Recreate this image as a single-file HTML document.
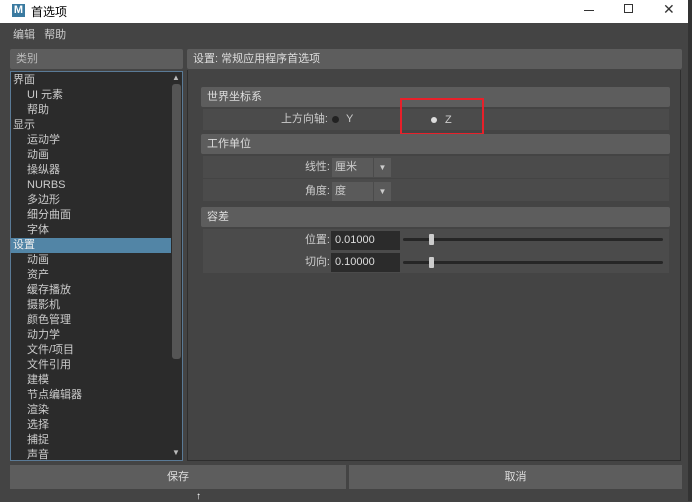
<!DOCTYPE html>
<html><head><meta charset="utf-8"><style>
*{margin:0;padding:0;box-sizing:border-box}
body{width:692px;height:501px;background:#444;font-family:"Liberation Sans","Noto Sans CJK SC",sans-serif;font-size:11px;color:#ccc;position:relative;overflow:hidden}
.a{position:absolute}
.hdr{background:#5d5d5d;border-radius:2px;color:#ddd;padding-left:6px;line-height:20px}
.row{background:#4b4b4b}
.lbl{text-align:right;color:#ccc;line-height:14px}
.item{position:absolute;left:2px;line-height:15px;color:#ccc;white-space:nowrap}
</style></head><body>
<div class="a" style="left:0;top:0;width:688px;height:23px;background:#fff;color:#000;font-size:12px">
 <div class="a" style="left:12px;top:4px;width:13px;height:13px;background:#3a7aa0;color:#fff;font-size:11px;font-weight:bold;line-height:13px;text-align:center">M</div>
 <div class="a" style="left:31px;top:3px">首选项</div>
 <div class="a" style="left:584px;top:10px;width:10px;height:1px;background:#333"></div>
 <div class="a" style="left:624px;top:4px;width:9px;height:9px;border:1px solid #333"></div>
 <div class="a" style="left:663px;top:1px;font-size:14px;color:#333">✕</div>
</div>
<div class="a" style="left:688px;top:0;width:4px;height:501px;background:#333"></div>
<div class="a" style="left:13px;top:26px;color:#ccc">编辑&nbsp;&nbsp;&nbsp;帮助</div>
<div class="a hdr" style="left:10px;top:49px;width:173px;height:20px;color:#bbb">类别</div>
<div class="a hdr" style="left:187px;top:49px;width:495px;height:20px">设置: 常规应用程序首选项</div>
<div class="a" style="left:10px;top:71px;width:173px;height:390px;background:#2b2b2b;border:1px solid #5a7a96;overflow:hidden">
 <div class="a" style="left:0;top:166px;width:160px;height:15px;background:#5285a6"></div>
 <div class="item" style="top:1px">界面</div>
 <div class="item" style="top:16px;left:16px">UI 元素</div>
 <div class="item" style="top:31px;left:16px">帮助</div>
 <div class="item" style="top:46px">显示</div>
 <div class="item" style="top:61px;left:16px">运动学</div>
 <div class="item" style="top:76px;left:16px">动画</div>
 <div class="item" style="top:91px;left:16px">操纵器</div>
 <div class="item" style="top:106px;left:16px">NURBS</div>
 <div class="item" style="top:121px;left:16px">多边形</div>
 <div class="item" style="top:136px;left:16px">细分曲面</div>
 <div class="item" style="top:151px;left:16px">字体</div>
 <div class="item" style="top:166px;color:#eee">设置</div>
 <div class="item" style="top:181px;left:16px">动画</div>
 <div class="item" style="top:196px;left:16px">资产</div>
 <div class="item" style="top:211px;left:16px">缓存播放</div>
 <div class="item" style="top:226px;left:16px">摄影机</div>
 <div class="item" style="top:241px;left:16px">颜色管理</div>
 <div class="item" style="top:256px;left:16px">动力学</div>
 <div class="item" style="top:271px;left:16px">文件/项目</div>
 <div class="item" style="top:286px;left:16px">文件引用</div>
 <div class="item" style="top:301px;left:16px">建模</div>
 <div class="item" style="top:316px;left:16px">节点编辑器</div>
 <div class="item" style="top:331px;left:16px">渲染</div>
 <div class="item" style="top:346px;left:16px">选择</div>
 <div class="item" style="top:361px;left:16px">捕捉</div>
 <div class="item" style="top:376px;left:16px">声音</div>
 <div class="a" style="left:160px;top:0;width:12px;height:388px;background:#2b2b2b"></div>
 <div class="a" style="left:161px;top:12px;width:9px;height:275px;background:#555;border-radius:3px"></div>
 <div class="a" style="left:161px;top:1px;font-size:8px;color:#bbb">▲</div>
 <div class="a" style="left:161px;top:376px;font-size:8px;color:#bbb">▼</div>
</div>
<div class="a" style="left:187px;top:70px;width:494px;height:391px;border:1px solid #2e2e2e;border-top:none"></div>
<div class="a hdr" style="left:201px;top:87px;width:469px;height:20px">世界坐标系</div>
<div class="a row" style="left:203px;top:109px;width:466px;height:21px"></div>
<div class="a lbl" style="left:248px;top:112px;width:80px">上方向轴:</div>
<div class="a" style="left:332px;top:116px;width:7px;height:7px;border-radius:50%;background:#222"></div>
<div class="a" style="left:346px;top:112px;line-height:14px">Y</div>
<div class="a" style="left:431px;top:117px;width:6px;height:6px;border-radius:50%;background:#ddd"></div>
<div class="a" style="left:445px;top:113px;line-height:14px">Z</div>
<div class="a" style="left:400px;top:98px;width:84px;height:37px;border:2px solid #e8202a"></div>
<div class="a hdr" style="left:201px;top:134px;width:469px;height:20px">工作单位</div>
<div class="a row" style="left:203px;top:156px;width:466px;height:22px"></div>
<div class="a row" style="left:203px;top:179px;width:466px;height:22px"></div>
<div class="a lbl" style="left:250px;top:160px;width:80px">线性:</div>
<div class="a" style="left:332px;top:158px;width:41px;height:19px;background:#5a5a5a;padding-left:3px;line-height:19px">厘米</div>
<div class="a" style="left:374px;top:158px;width:17px;height:19px;background:#5a5a5a;font-size:8px;text-align:center;line-height:19px">▼</div>
<div class="a lbl" style="left:250px;top:184px;width:80px">角度:</div>
<div class="a" style="left:332px;top:182px;width:41px;height:19px;background:#5a5a5a;padding-left:3px;line-height:19px">度</div>
<div class="a" style="left:374px;top:182px;width:17px;height:19px;background:#5a5a5a;font-size:8px;text-align:center;line-height:19px">▼</div>
<div class="a hdr" style="left:201px;top:207px;width:469px;height:20px">容差</div>
<div class="a row" style="left:203px;top:229px;width:466px;height:44px"></div>
<div class="a lbl" style="left:250px;top:233px;width:80px">位置:</div>
<div class="a" style="left:331px;top:231px;width:69px;height:19px;background:#2b2b2b;padding-left:4px;line-height:19px;color:#ddd">0.01000</div>
<div class="a lbl" style="left:250px;top:255px;width:80px">切向:</div>
<div class="a" style="left:331px;top:253px;width:69px;height:19px;background:#2b2b2b;padding-left:4px;line-height:19px;color:#ddd">0.10000</div>
<div class="a" style="left:403px;top:238px;width:260px;height:3px;background:#262626;border-radius:2px"></div>
<div class="a" style="left:403px;top:261px;width:260px;height:3px;background:#262626;border-radius:2px"></div>
<div class="a" style="left:429px;top:234px;width:5px;height:11px;background:#ccc;border-radius:1px"></div>
<div class="a" style="left:429px;top:257px;width:5px;height:11px;background:#ccc;border-radius:1px"></div>
<div class="a" style="left:10px;top:465px;width:336px;height:24px;background:#5d5d5d;text-align:center;line-height:24px;color:#ddd">保存</div>
<div class="a" style="left:349px;top:465px;width:333px;height:24px;background:#5d5d5d;text-align:center;line-height:24px;color:#ddd">取消</div>
<div class="a" style="left:196px;top:491px;color:#fff;font-size:10px">↑</div>
</body></html>
